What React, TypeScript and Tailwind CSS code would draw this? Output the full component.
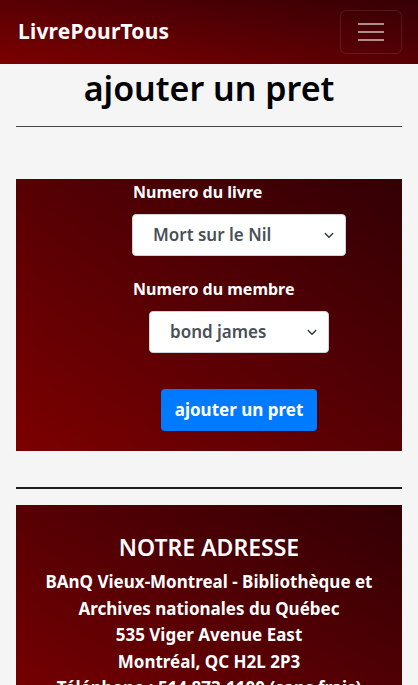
import React from 'react';

const font = { fontFamily: '"Noto Sans", "Liberation Sans", sans-serif' };

function Navbar() {
  return (
    <nav className="h-16 flex items-center justify-between pl-[18px] pr-4 bg-linear-to-tr from-[#7c0000] to-[#360004]">
      <span className="text-white text-[21px] font-bold tracking-[0.2px]">LivrePourTous</span>
      <button className="w-[62px] h-[44px] rounded-md border border-white/10 flex flex-col items-center justify-center gap-[6px]">
        <span className="block w-[26px] h-[2px] bg-white/55" />
        <span className="block w-[26px] h-[2px] bg-white/55" />
        <span className="block w-[26px] h-[2px] bg-white/55" />
      </button>
    </nav>
  );
}

function Chevron() {
  return (
    <svg width="12" height="12" viewBox="0 0 16 16" className="absolute right-[10px] top-1/2 -translate-y-1/2">
      <path d="M3 6l5 5 5-5" fill="none" stroke="#343a40" strokeWidth="2" strokeLinecap="round" strokeLinejoin="round" />
    </svg>
  );
}

function Select({ value, width }: { value: string; width: string }) {
  return (
    <div className={`relative ${width} h-[42px] bg-white rounded-[4px] border border-[#ced4da] flex items-center pl-5`}>
      <span className="text-[#495057] text-[17px] font-semibold">{value}</span>
      <Chevron />
    </div>
  );
}

export default function App() {
  return (
    <div className="min-h-screen bg-[#f5f5f5]" style={font}>
      <Navbar />
      <div className="px-4">
        <h1 className="text-center text-[34px] font-semibold leading-[44px] text-black pt-[2px]">ajouter un pret</h1>
        <hr className="mt-[16px] border-t border-[#444]" />

        <section className="mt-[52px] h-[272px] bg-linear-to-tr from-[#7c0000] to-[#330004] flex flex-col">
          <div className="ml-[116px] w-[214px] flex flex-col items-center">
            <label className="self-start pl-[1px] mt-[1px] text-white text-[16px] font-bold leading-6">Numero du livre</label>
            <div className="mt-[10px]">
              <Select value="Mort sur le Nil" width="w-[214px]" />
            </div>
            <label className="self-start pl-[1px] mt-[21px] text-white text-[16px] font-bold leading-6">Numero du membre</label>
            <div className="mt-[10px]">
              <Select value="bond james" width="w-[180px]" />
            </div>
            <button className="mt-[36px] w-[156px] h-[42px] rounded-[4px] bg-[#007bff] text-white text-[17px] font-bold">
              ajouter un pret
            </button>
          </div>
        </section>

        <hr className="mt-[36px] border-t-2 border-[#1e1e1e]" />

        <section className="mt-[16px] bg-linear-to-tr from-[#7c0000] to-[#330004] pt-[26px] pb-8 text-center text-white">
          <h2 className="text-[23px] font-semibold leading-8">NOTRE ADRESSE</h2>
          <div className="mt-[6px] text-[17px] font-bold leading-[26.5px] px-2">
            <p>BAnQ Vieux-Montreal - Bibliothèque et</p>
            <p>Archives nationales du Québec</p>
            <p>535 Viger Avenue East</p>
            <p>Montréal, QC H2L 2P3</p>
            <p>Téléphone : 514 873-1100 (sans frais)</p>
          </div>
        </section>
      </div>
    </div>
  );
}
